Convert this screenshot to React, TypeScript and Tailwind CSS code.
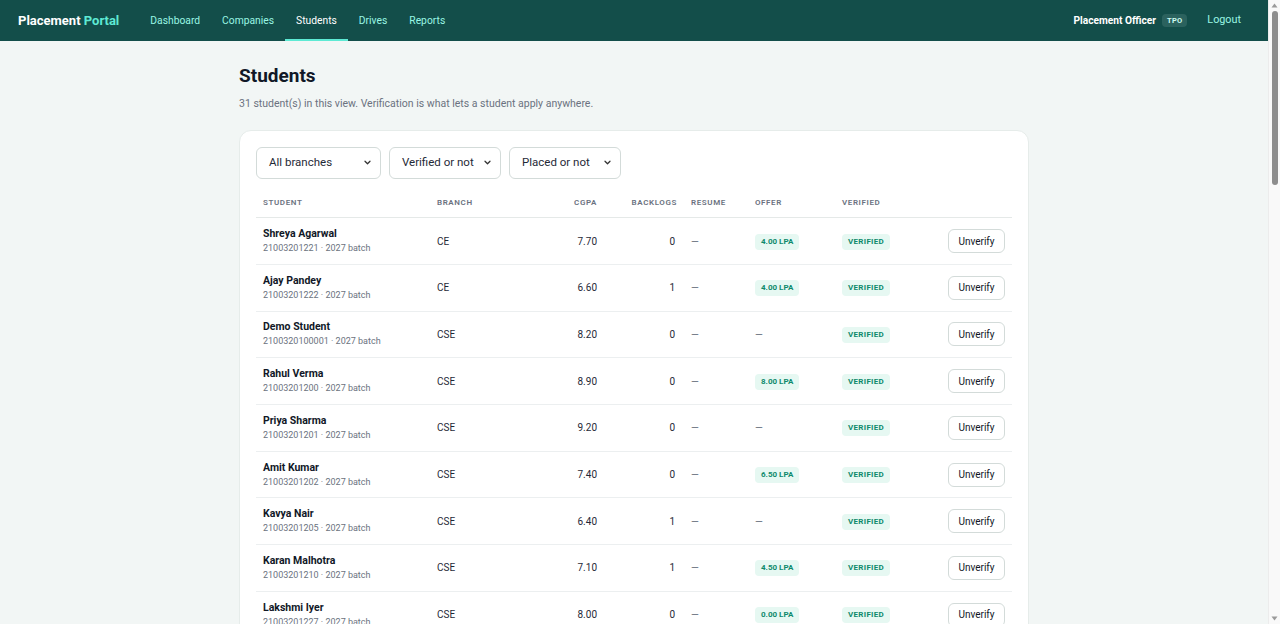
import React from "react";

type Row = { name: string; roll: string; branch: string; cgpa: string; backlogs: number; offer: string | null };

const rows: Row[] = [
  { name: "Shreya Agarwal", roll: "21003201221", branch: "CE", cgpa: "7.70", backlogs: 0, offer: "4.00 LPA" },
  { name: "Ajay Pandey", roll: "21003201222", branch: "CE", cgpa: "6.60", backlogs: 1, offer: "4.00 LPA" },
  { name: "Demo Student", roll: "2100320100001", branch: "CSE", cgpa: "8.20", backlogs: 0, offer: null },
  { name: "Rahul Verma", roll: "21003201200", branch: "CSE", cgpa: "8.90", backlogs: 0, offer: "8.00 LPA" },
  { name: "Priya Sharma", roll: "21003201201", branch: "CSE", cgpa: "9.20", backlogs: 0, offer: null },
  { name: "Amit Kumar", roll: "21003201202", branch: "CSE", cgpa: "7.40", backlogs: 0, offer: "6.50 LPA" },
  { name: "Kavya Nair", roll: "21003201205", branch: "CSE", cgpa: "6.40", backlogs: 1, offer: null },
  { name: "Karan Malhotra", roll: "21003201210", branch: "CSE", cgpa: "7.10", backlogs: 1, offer: "4.50 LPA" },
  { name: "Lakshmi Iyer", roll: "21003201227", branch: "CSE", cgpa: "8.00", backlogs: 0, offer: "0.00 LPA" },
];

function Select({ label, w }: { label: string; w: string }) {
  return (
    <div className={`${w} h-8 rounded-md border border-[#d3dbd9] bg-white flex items-center justify-between pl-3 pr-[9px] text-[11.5px] text-[#1f2937]`}>
      <span>{label}</span>
      <svg width="7" height="5" viewBox="0 0 8 6" fill="none">
        <path d="M1 1.5 L4 4.5 L7 1.5" stroke="#333" strokeWidth="1.5" strokeLinecap="round" strokeLinejoin="round" />
      </svg>
    </div>
  );
}

function FakeScrollbar() {
  return (
    <div className="w-[12px] h-full bg-[#f9f9f9] flex flex-col items-center border-l border-[#ececec]">
      <svg width="7" height="5" viewBox="0 0 7 5" className="mt-[3px]">
        <path d="M3.5 0.5 L6.5 4.5 L0.5 4.5 Z" fill="#9a9a9a" />
      </svg>
      <div className="mt-[3px] w-[6px] h-[174px] rounded-full bg-[#8d8d8d]" />
      <div className="flex-1" />
      <svg width="7" height="5" viewBox="0 0 7 5" className="mb-[3px]">
        <path d="M0.5 0.5 L6.5 0.5 L3.5 4.5 Z" fill="#9a9a9a" />
      </svg>
    </div>
  );
}

export default function App() {
  return (
    <div className="h-screen flex overflow-hidden bg-[#f2f6f5]" style={{ fontFamily: 'Roboto, "Noto Sans", sans-serif' }}>
      <div className="flex-1 min-w-0 overflow-hidden">
        <nav className="h-[41px] bg-[#134e4a] flex items-center pl-[18px] pr-[27px]">
          <div className="text-[13px] font-bold text-white">
            Placement <span className="text-[#5eead4]">Portal</span>
          </div>
          <div className="flex h-full ml-[20px] text-[10.3px]">
            {["Dashboard", "Companies", "Students", "Drives", "Reports"].map((l) => (
              <div
                key={l}
                className={`h-full flex items-center px-[11px] pt-[2px] border-b-2 ${
                  l === "Students" ? "text-white border-[#5eead4]" : "text-[#99f6e4] border-transparent"
                }`}
              >
                {l}
              </div>
            ))}
          </div>
          <div className="ml-auto flex items-center">
            <span className="text-[10.2px] font-bold text-white">Placement Officer</span>
            <span className="ml-[6px] px-[5px] py-[1px] rounded-sm bg-[#2b625e] text-[7.5px] font-bold text-[#ccfbf1] tracking-wide">TPO</span>
            <span className="ml-[20px] text-[10.8px] text-[#99f6e4]">Logout</span>
          </div>
        </nav>

        <main className="w-[790px] mx-auto pt-[22px] pb-10">
          <h1 className="text-[19px] font-bold text-[#111827] leading-[26px]">Students</h1>
          <p className="mt-[7px] text-[10.5px] text-[#6b7280]">
            31 student(s) in this view. Verification is what lets a student apply anywhere.
          </p>

          <div className="mt-[18px] bg-white rounded-xl border border-[#e6ecea] pt-[16px] px-[16px] pb-4">
            <div className="flex gap-2">
              <Select label="All branches" w="w-[125px]" />
              <Select label="Verified or not" w="w-[112px]" />
              <Select label="Placed or not" w="w-[112px]" />
            </div>

            <table className="mt-[10px] w-[756px] table-fixed border-collapse">
              <colgroup>
                <col className="w-[174px]" />
                <col className="w-[110px]" />
                <col className="w-[64px]" />
                <col className="w-[80px]" />
                <col className="w-[64px]" />
                <col className="w-[87px]" />
                <col className="w-[95px]" />
                <col className="w-[82px]" />
              </colgroup>
              <thead>
                <tr className="h-[29px] border-b border-[#e5e9e8] text-[8px] tracking-[0.6px] text-[#6b7280]">
                  <th className="text-left font-semibold px-[7px]">STUDENT</th>
                  <th className="text-left font-semibold px-[7px]">BRANCH</th>
                  <th className="text-right font-semibold px-[7px]">CGPA</th>
                  <th className="text-right font-semibold px-[7px]">BACKLOGS</th>
                  <th className="text-left font-semibold px-[7px]">RESUME</th>
                  <th className="text-left font-semibold px-[7px]">OFFER</th>
                  <th className="text-left font-semibold px-[7px]">VERIFIED</th>
                  <th></th>
                </tr>
              </thead>
              <tbody>
                {rows.map((r) => (
                  <tr key={r.roll} className="h-[46.7px] border-b border-[#eceff0] text-[10px] text-[#1f2937]">
                    <td className="px-[7px]">
                      <div className="text-[10.5px] font-bold text-[#111827] leading-[14px]">{r.name}</div>
                      <div className="text-[9px] text-[#6b7280] leading-[13px] mt-[1px]">{r.roll} · 2027 batch</div>
                    </td>
                    <td className="px-[7px]">{r.branch}</td>
                    <td className="px-[7px] text-right">{r.cgpa}</td>
                    <td className="px-[9px] text-right">{r.backlogs}</td>
                    <td className="px-[7px] text-[#6b7280]">—</td>
                    <td className="px-[7px]">
                      {r.offer ? (
                        <span className="inline-block rounded bg-[#e6f8f2] px-[6px] py-[3px] text-[8px] leading-[10px] font-bold text-[#0f8a6c]">{r.offer}</span>
                      ) : (
                        <span className="text-[#6b7280]">—</span>
                      )}
                    </td>
                    <td className="px-[7px]">
                      <span className="inline-block rounded bg-[#e6f8f2] px-[6px] py-[3px] text-[8px] leading-[10px] font-bold tracking-[0.3px] text-[#0f8a6c]">VERIFIED</span>
                    </td>
                    <td className="px-[7px] text-right">
                      <button className="h-[24px] w-[57px] rounded-md border border-[#d3dbd9] bg-white text-[10px] text-[#111827]">Unverify</button>
                    </td>
                  </tr>
                ))}
              </tbody>
            </table>
          </div>
        </main>
      </div>
      <FakeScrollbar />
    </div>
  );
}
